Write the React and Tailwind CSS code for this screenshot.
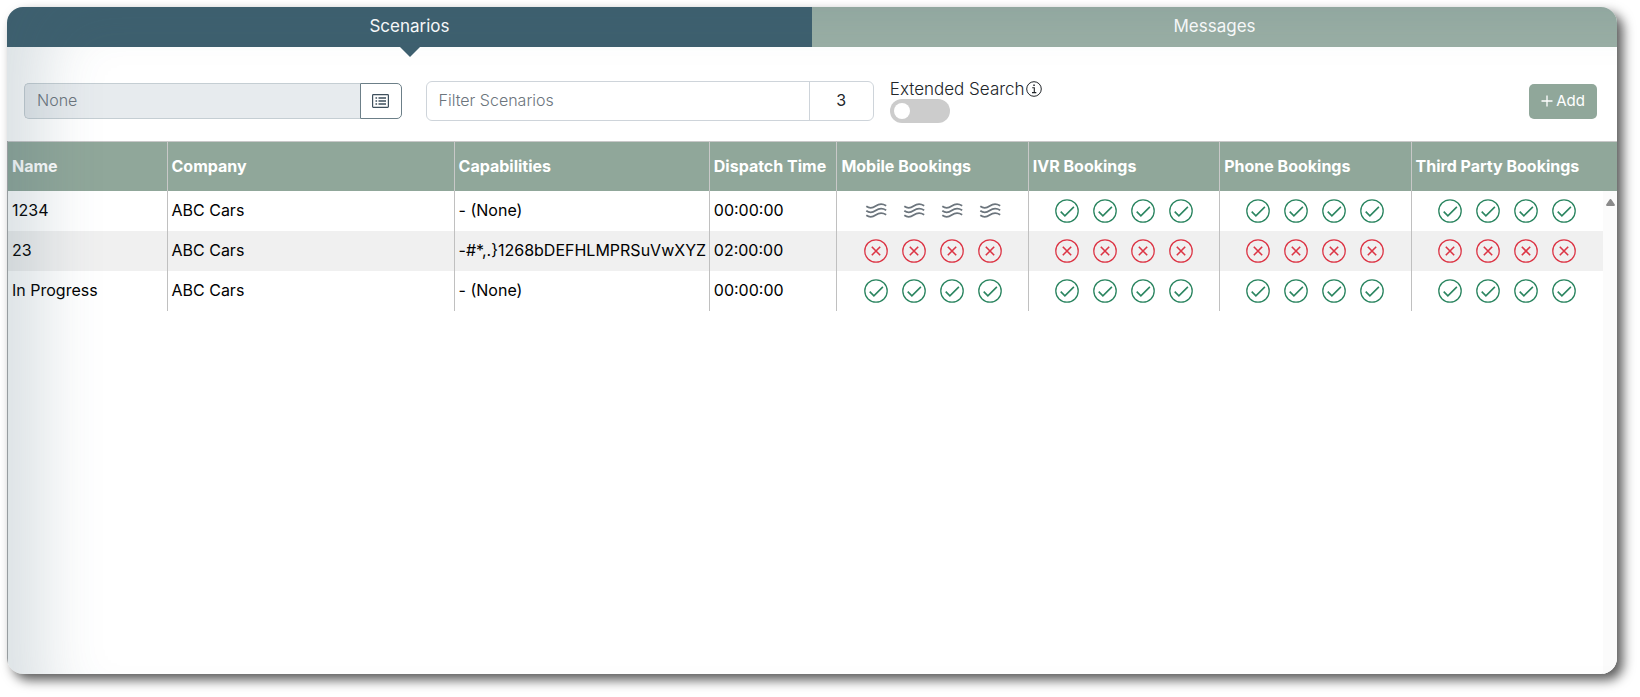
import { useState } from "react";

const columns = [
  { label: "Name", width: "w-[10%]" },
  { label: "Company", width: "w-[18%]" },
  { label: "Capabilities", width: "w-[16%]" },
  { label: "Dispatch Time", width: "w-[8%]" },
  { label: "Mobile Bookings", width: "w-[12%]" },
  { label: "IVR Bookings", width: "w-[12%]" },
  { label: "Phone Bookings", width: "w-[12%]" },
  { label: "Third Party Bookings", width: "w-[12%]" },
];

const scenarios = [
  {
    name: "1234",
    company: "ABC Cars",
    capabilities: "- (None)",
    dispatch: "00:00:00",
    bookings: ["mixed", "yes", "yes", "yes"],
  },
  {
    name: "23",
    company: "ABC Cars",
    capabilities: "-#*,.}1268bDEFHLMPRSuVwXYZ",
    dispatch: "02:00:00",
    bookings: ["no", "no", "no", "no"],
  },
  {
    name: "In Progress",
    company: "ABC Cars",
    capabilities: "- (None)",
    dispatch: "00:00:00",
    bookings: ["yes", "yes", "yes", "yes"],
  },
];

const statusIcons = {
  yes: {
    style: "text-[#2b8560]",
    drawing: (
      <>
        <circle cx="12" cy="12" r="11.2" />
        <path d="M5.7 12.6 9.9 16.8 18.9 7.9" strokeWidth="1.6" />
      </>
    ),
  },
  no: {
    style: "text-[#dc3545]",
    drawing: (
      <>
        <circle cx="12" cy="12" r="11.2" />
        <path d="M7.8 7.8l8.4 8.4M16.2 7.8l-8.4 8.4" strokeWidth="1.6" />
      </>
    ),
  },
  mixed: {
    style: "text-[#6c757d]",
    drawing: (
      <path
        d="M2.3 7.3c3.5 2.6 6.2 2 9.4-.3s6.800-2.600 10.500-.3M2.300 11.800c3.500 2.600 6.200 2 9.400-.3s6.800-2.600 10.500-.3M2.300 16.300c3.500 2.600 6.200 2 9.400-.3s6.800-2.600 10.500-.3"
        strokeWidth="1.7"
      />
    ),
  },
};

function StatusIcons({ status }) {
  const { style, drawing } = statusIcons[status];
  return (
    <div className={`flex justify-center gap-[14px] ${style}`}>
      {[0, 1, 2, 3].map((i) => (
        <svg
          key={i}
          viewBox="0 0 24 24"
          fill="none"
          stroke="currentColor"
          strokeWidth="1.3"
          className="w-6 h-6"
        >
          {drawing}
        </svg>
      ))}
    </div>
  );
}

export default function App() {
  const [filter, setFilter] = useState("");
  const [extended, setExtended] = useState(false);

  return (
    <div className="h-screen pt-[7px] pl-[7px] pr-[23px] pb-[23px] bg-white font-['Inter',sans-serif] text-base text-[#212529]">
      <main className="relative flex flex-col h-full rounded-2xl overflow-hidden bg-white shadow-[6px_6px_12px_rgba(0,0,0,0.65)]">

        {/* Tabs */}
        <nav className="grid grid-cols-2 h-10 shrink-0 text-[17px] text-white">
          <button className="relative bg-[#3e606f]">
            Scenarios
            <span className="absolute top-full left-1/2 -translate-x-1/2 border-x-[10px] border-t-[10px] border-x-transparent border-t-[#3e606f]" />
          </button>
          <button className="bg-[#9aafa5]">Messages</button>
        </nav>

        {/* Toolbar */}
        <div className="flex items-center h-[94px] pt-[14px] pl-[17px] pr-5 shrink-0">
          <div className="flex w-[24%] h-9">
            <input
              aria-label="Group"
              placeholder="None"
              disabled
              className="flex-1 min-w-0 px-3 pb-0.5 text-base font-light rounded-l-[5px] border border-r-0 border-[#c5ced3] bg-[#e7ebee] placeholder:text-[#6c757d]"
            />
            <button
              aria-label="Select group"
              className="flex items-center justify-center w-[42px] rounded-r-[5px] border border-[#6c7f88] text-[#3e4f5c]"
            >
              <svg viewBox="0 0 17 14" fill="none" stroke="currentColor" className="w-[17px] h-[14px]">
                <rect x=".6" y=".6" width="15.8" height="12.8" rx=".8" strokeWidth="1.2" />
                <path d="M3.500 4h1.600M3.500 7h1.600M3.500 10h1.600M6.500 4h7.500M6.500 7h7.500M6.500 10h7.500" strokeWidth="1.4" />
              </svg>
            </button>
          </div>

          <div className="flex w-[28.5%] h-10 ml-6 rounded-md border border-[#ced4da]">
            <input
              aria-label="Filter Scenarios"
              placeholder="Filter Scenarios"
              value={filter}
              onChange={(e) => setFilter(e.target.value)}
              className="flex-1 min-w-0 px-3 pb-0.5 text-base font-light outline-none placeholder:text-[#6c757d]"
            />
            <span className="flex items-center justify-center w-16 pb-0.5 border-l border-[#ced4da]">
              {scenarios.length}
            </span>
          </div>

          <label className="ml-4 text-[17px] leading-[18px] font-light">
            <span className="flex items-center gap-px">
              Extended Search
              <svg viewBox="0 0 16 16" fill="none" stroke="currentColor" className="w-4 h-4">
                <circle cx="8" cy="8" r="7.3" strokeWidth="1" />
                <path d="M6.200 6.700H8.300V11.600M6 11.600h4.300" strokeWidth="1.100" />
                <path d="M7.300 4.200h1.500" strokeWidth="1.500" />
              </svg>
            </span>
            <input
              type="checkbox"
              checked={extended}
              onChange={(e) => setExtended(e.target.checked)}
              className="peer sr-only"
            />
            <span className="flex w-[60px] h-6 mt-px p-1 rounded-full bg-[#ccc] peer-checked:bg-[#3e606f] peer-checked:justify-end">
              <span className="w-4 h-4 rounded-full bg-white" />
            </span>
          </label>

          <button className="flex items-center justify-center gap-[3px] w-[68px] h-[35px] ml-auto rounded-[5px] bg-[#90a79a] text-[15px] text-white">
            <svg viewBox="0 0 12 12" stroke="currentColor" strokeWidth="1.3" className="w-3 h-3">
              <path d="M6 .5v11M.5 6h11" />
            </svg>
            Add
          </button>
        </div>

        {/* Scenario list */}
        <div className="flex flex-1 min-h-0 border-l border-[#aaa]">
          <div className="flex-1 min-w-0">
            <table className="w-full table-fixed border-separate border-spacing-0 text-left whitespace-nowrap">
              <thead>
                <tr className="h-[50px] bg-[#90a79a] text-white">
                  {columns.map((col) => (
                    <th
                      key={col.label}
                      className={`${col.width} p-0 pl-1 pb-0.5 font-bold border-t border-r last:border-r-0 border-[#c8c8c8]`}
                    >
                      {col.label}
                    </th>
                  ))}
                </tr>
              </thead>
              <tbody className="text-black">
                {scenarios.map((row) => (
                  <tr key={row.name} className="h-10 even:bg-[#f0f0f0]">
                    <td className="p-0 pl-1 pb-0.5 border-r border-[#c0c0c0]">{row.name}</td>
                    <td className="p-0 pl-1 pb-0.5 border-r border-[#c0c0c0]">{row.company}</td>
                    <td className="p-0 pl-1 pb-0.5 border-r border-[#c0c0c0]">{row.capabilities}</td>
                    <td className="p-0 pl-1 pb-0.5 border-r border-[#c0c0c0]">{row.dispatch}</td>
                    {row.bookings.map((status, i) => (
                      <td key={i} className="p-0 border-r last:border-r-0 border-[#c0c0c0]">
                        <StatusIcons status={status} />
                      </td>
                    ))}
                  </tr>
                ))}
              </tbody>
            </table>
          </div>

          {/* Scroll track */}
          <div className="flex flex-col w-[14px]">
            <div className="h-[50px] border-t border-[#c8c8c8] bg-[#90a79a]" />
            <div className="flex-1 pt-2 pl-[3px] bg-[#fbfbfb]">
              <svg viewBox="0 0 9 7" className="w-[9px] h-[7px] fill-[#8a8a8a]">
                <path d="M3.6.6a1.1 1.1 0 0 1 1.8 0L8.8 5.4Q9.2 7 8 7H1Q-.2 7 .2 5.4z" />
              </svg>
            </div>
          </div>
        </div>

        {/* Shade along the left edge */}
        <div className="absolute inset-0 rounded-2xl pointer-events-none shadow-[inset_63px_25px_60px_-25px_rgba(62,95,109,0.18)]" />
      </main>
    </div>
  );
}
